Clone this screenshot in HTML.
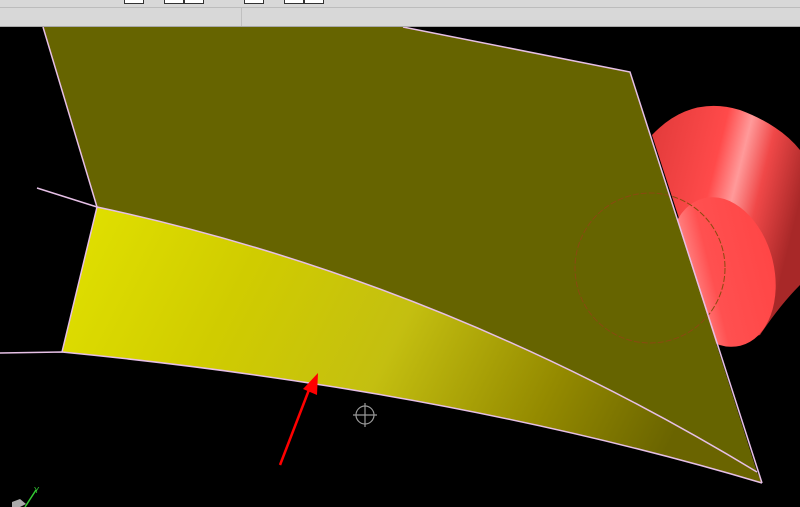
<!DOCTYPE html>
<html><head><style>
html,body{margin:0;padding:0;width:800px;height:507px;overflow:hidden;background:#000;font-family:"Liberation Sans",sans-serif}
#tb{position:absolute;left:0;top:0;width:800px;height:26px;background:#d8d8d8;border-bottom:1px solid #a8a8a8}
#tb .l{position:absolute;left:0;top:7px;width:800px;height:1px;background:#bcbcbc}
#tb .s{position:absolute;left:241px;top:8px;width:1px;height:18px;background:#c0c0c0}
.bx{position:absolute;top:0;height:3px;border:1px solid #333;border-top:none;background:#fff}
svg{position:absolute;left:0;top:27px}
</style></head><body>
<div id="tb"><div class="l"></div><div class="s"></div>
<div class="bx" style="left:124px;width:18px"></div>
<div class="bx" style="left:164px;width:18px"></div>
<div class="bx" style="left:184px;width:18px"></div>
<div class="bx" style="left:244px;width:18px"></div>
<div class="bx" style="left:284px;width:18px"></div>
<div class="bx" style="left:304px;width:18px"></div>
</div>
<svg width="800" height="480" viewBox="0 27 800 480">
<defs>
<linearGradient id="yg" x1="0" y1="0" x2="1" y2="0.2">
<stop offset="0" stop-color="#e2e200"/><stop offset="0.3" stop-color="#d0cc00"/><stop offset="0.55" stop-color="#c4bf10"/><stop offset="0.8" stop-color="#948a00"/><stop offset="1" stop-color="#6a6400"/>
</linearGradient>
<linearGradient id="rg" x1="0" y1="0" x2="1" y2="0.4">
<stop offset="0" stop-color="#e03a3a"/><stop offset="0.45" stop-color="#ff4a4a"/><stop offset="0.6" stop-color="#ff9a9a"/><stop offset="0.75" stop-color="#f04848"/><stop offset="1" stop-color="#a82828"/>
</linearGradient>
<linearGradient id="fg" x1="0" y1="0" x2="1" y2="0">
<stop offset="0" stop-color="#ffb0b0"/><stop offset="0.4" stop-color="#ff5050"/><stop offset="1" stop-color="#ff4646"/>
</linearGradient>
</defs>
<!-- cylinder -->
<path d="M652,135 Q690,95 740,110 Q780,125 800,150 L800,285 Q780,305 760,335 L720,345 Z" fill="url(#rg)"/>
<ellipse cx="722" cy="272" rx="52" ry="76" transform="rotate(-14 722 272)" fill="url(#fg)"/>
<!-- yellow surface -->
<path d="M97,207 Q440,280 757,472 L762,483 Q450,390 62,352 Z" fill="url(#yg)"/>
<!-- olive plane -->
<path d="M43,27 L403,27 L630,72 L757,472 Q440,280 97,207 Z" fill="#666400"/>
<ellipse cx="650" cy="268" rx="75" ry="75" fill="none" stroke="#8a4a10" stroke-width="1" stroke-dasharray="6,2"/>
<!-- edges -->
<g stroke="#e6c0e6" stroke-width="1.5" fill="none">
<path d="M43,27 L97,207 L62,352"/>
<path d="M403,27 L630,72 L762,483"/>
<path d="M37,188 L97,207 Q440,280 757,472"/>
<path d="M0,353 L62,352 Q450,390 762,483"/>
</g>
<!-- arrow -->
<line x1="280" y1="465" x2="312" y2="382" stroke="#f00" stroke-width="2.5"/>
<polygon points="318,373 317,395 303,389" fill="#f00"/>
<!-- crosshair -->
<g stroke="#999" stroke-width="1.2" fill="none"><circle cx="365" cy="415" r="9"/><line x1="353" y1="415" x2="377" y2="415"/><line x1="365" y1="403" x2="365" y2="427"/></g>
<!-- axis -->
<line x1="25" y1="507" x2="36" y2="490" stroke="#3c3" stroke-width="1.5"/>
<text x="34" y="493" font-size="8" fill="#3c3">Y</text>
<polygon points="12,502 20,499 26,504 20,507 12,507" fill="#aaa"/>
</svg>
</body></html>
